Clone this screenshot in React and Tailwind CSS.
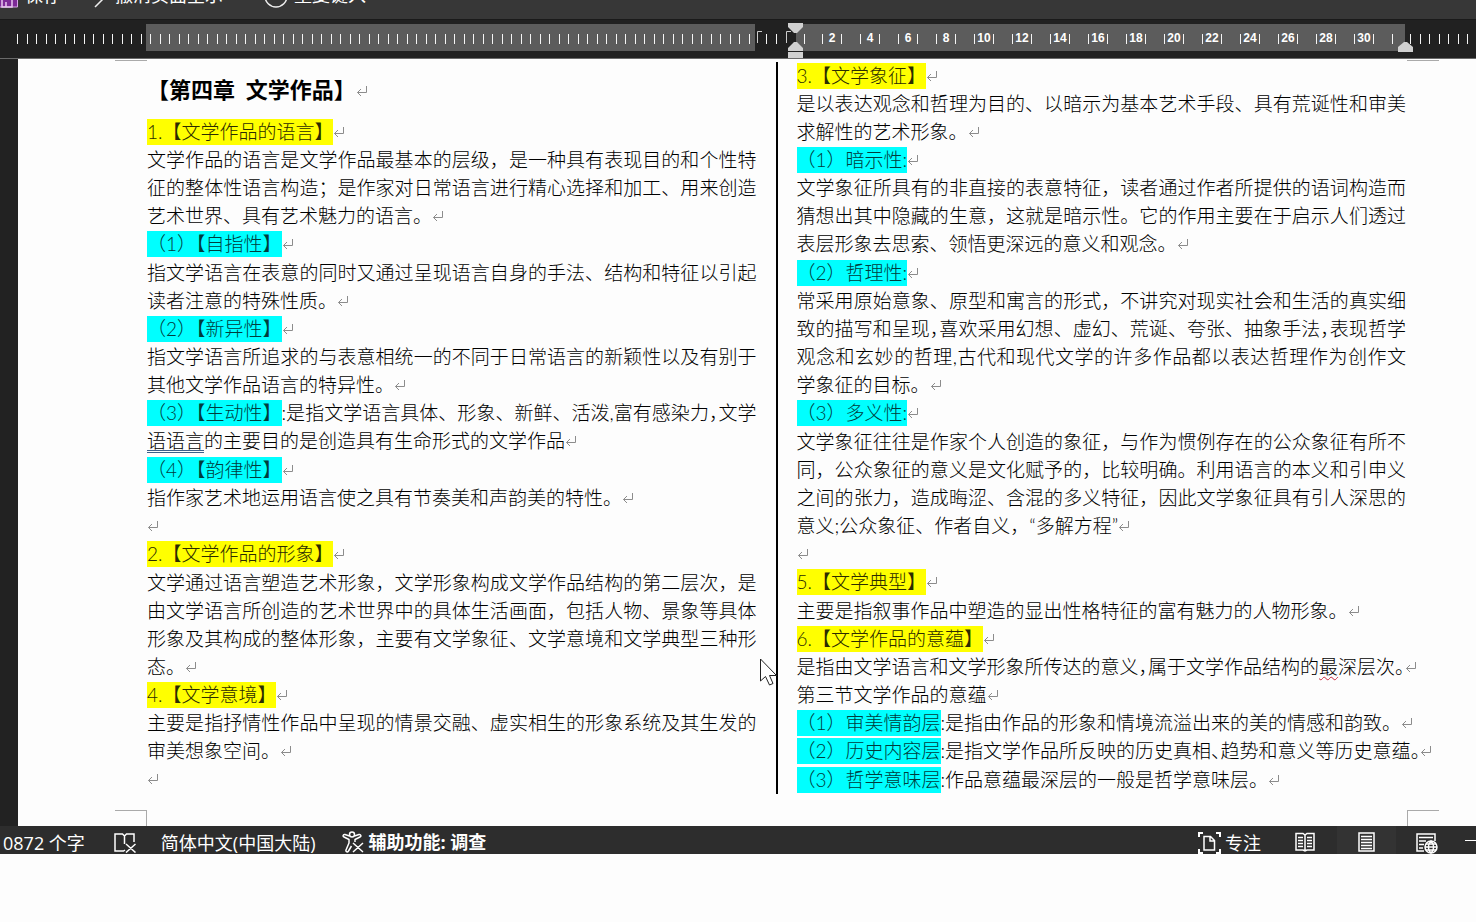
import React from 'react';

const Mark = () => (
    <svg className="inline-block align-baseline mb-0.5 text-[#8c8c8c]" width="12" height="10" viewBox="0 0 12 10" fill="none" stroke="currentColor" aria-hidden="true">
        <path d="M10.5 0V6.5H1.5M5 3L1.5 6.5L5 10" />
    </svg>
);

// Half-width fullwidth punctuation
const Half = ({ children }) => <span className="[font-feature-settings:'halt']">{children}</span>;

const Yellow = ({ children }) => <mark className="inline-block leading-[26px] bg-[#ffff00] text-[#2c2c00]">{children}</mark>;

const Cyan = ({ children }) => <mark className="inline-block leading-[26px] bg-[#00ffff] text-[#003c3c]">{children}</mark>;

// A line that fills the column
const Full = ({ children }) => <span className="block [text-align-last:justify]">{children}</span>;

// The last line of a paragraph
const Last = ({ children }) => <span className="block">{children}<Mark /></span>;

const tickPath = (count, start) =>
    Array.from({ length: count }, (_, i) => `M${Math.round(start + i * 9.5) + 0.5} 0V10`).join('');

const Ticks = ({ count, start }) => (
    <svg className="block w-full h-2.5" stroke="#f5f5f5" fill="none" aria-hidden="true">
        <path d={tickPath(count, start)} />
    </svg>
);

const numbers = [2, 4, 6, 8, 10, 12, 14, 16, 18, 20, 22, 24, 26, 28, 30];

const Toolbar = () => (
    <div className="flex h-5 bg-[#373737] overflow-hidden text-lg leading-6 text-white border-b border-[#1a1a1a]">
        <div className="flex items-end w-full h-2">
            <button type="button" className="flex items-end w-[94px] gap-1.5">
                <svg width="19" height="24" viewBox="0 0 19 24" fill="none" aria-hidden="true">
                    <path d="M0 4H17.5V23H0" fill="#7d2a97" stroke="#d9a5e6" />
                    <path d="M2 14H12V23H2ZM6 18V23" stroke="#e7c6ef" strokeWidth="1.5" />
                </svg>
                <span className="pb-0.5">保存</span>
            </button>
            <button type="button" className="flex items-end w-[168px] gap-2">
                <svg width="13" height="24" viewBox="0 0 13 24" fill="none" stroke="#eee" strokeWidth="1.5" aria-hidden="true">
                    <path d="M1 23L12 12" />
                </svg>
                <span className="pb-0.5">撤消页面呈示</span>
            </button>
            <button type="button" className="flex items-end gap-1.5">
                <svg width="26" height="24" viewBox="0 0 26 24" fill="none" stroke="#eee" strokeWidth="1.5" aria-hidden="true">
                    <circle cx="14" cy="12" r="11" />
                </svg>
                <span className="pb-0.5">重复键入</span>
            </button>
        </div>
    </div>
);

const Ruler = () => (
    <div className="flex pt-1 pb-[7px] bg-[#212121] border-b border-[#6a6a6a]">
        <div className="w-[146px] h-[27px] pt-[10px]">
            <Ticks count={14} start={17} />
        </div>
        <div className="flex-1 min-w-0 h-[27px] pt-[10px] bg-[#5c5c5c]">
            <Ticks count={64} start={4} />
        </div>
        <div className="relative w-[41px] h-[27px] pt-[10px]">
            <Ticks count={2} start={11} />
            <svg className="absolute left-0 -top-px" width="50" height="36" viewBox="0 0 50 36" aria-hidden="true">
                <path d="M2.500 20V8.500H7M31.500 20V8.500H36" fill="none" stroke="#ccc" />
                <path d="M33 0H48V4L42 10H39L33 4Z" fill="#d0d0d0" />
                <path d="M33 28V25L39 19H42L48 25V28ZM33 29H48V35H33Z" fill="#d0d0d0" />
            </svg>
        </div>
        <div className="flex flex-1 min-w-0 h-[27px] pt-[10px] bg-[#5c5c5c] text-xs leading-[9px] font-bold text-white font-['Liberation_Sans',sans-serif]">
            <div className="w-[17px]"><Ticks count={1} start={8} /></div>
            {numbers.map((n) => (
                <div key={n} className="flex flex-1 justify-center">
                    <span className="w-5 h-2.5 border-x border-[#f5f5f5] text-center">{n}</span>
                </div>
            ))}
            <div className="w-[22px]"><Ticks count={1} start={9} /></div>
        </div>
        <div className="relative w-[71px] h-[27px] pt-[10px]">
            <Ticks count={7} start={5} />
            <svg className="absolute -left-[7px] top-[18px]" width="15" height="10" viewBox="0 0 15 10" aria-hidden="true">
                <path d="M0 10V5L6 0H9L15 5V10Z" fill="#d0d0d0" />
            </svg>
        </div>
    </div>
);

const LeftColumn = () => (
    <article className="flex flex-col flex-1 min-w-0 gap-px whitespace-nowrap">
        <h1 className="h-[55px] text-[22px] leading-[55px] font-bold">【第四章&nbsp; 文学作品】<Mark /></h1>
        <section>
            <h2><Yellow>1.【文学作品的语言】</Yellow><Mark /></h2>
            <p>
                <Full>文学作品的语言是文学作品最基本的层级，是一种具有表现目的和个性特</Full>
                <Full>征的整体性语言构造；是作家对日常语言进行精心选择和加工、用来创造</Full>
                <Last>艺术世界、具有艺术魅力的语言。</Last>
            </p>
            <h3><Cyan>（1）【自指性】</Cyan><Mark /></h3>
        </section>
        <section>
            <p>
                <Full>指文学语言在表意的同时又通过呈现语言自身的手法、结构和特征以引起</Full>
                <Last>读者注意的特殊性质。</Last>
            </p>
            <h3><Cyan>（2）【新异性】</Cyan><Mark /></h3>
            <p>
                <Full>指文学语言所追求的与表意相统一的不同于日常语言的新颖性以及有别于</Full>
                <Last>其他文学作品语言的特异性。</Last>
            </p>
            <p>
                <Full><Cyan>（3）【生动性】</Cyan>:是指文学语言具体、形象、新鲜、活泼,富有感染力<Half>，</Half>文学</Full>
                <Last><span className="underline decoration-double decoration-1 decoration-[#3f5f8a] underline-offset-2">语语言</span>的主要目的是创造具有生命形式的文学作品</Last>
            </p>
        </section>
        <section>
            <h3><Cyan>（4）【韵律性】</Cyan><Mark /></h3>
            <p>
                <Last>指作家艺术地运用语言使之具有节奏美和声韵美的特性。</Last>
                <Last />
            </p>
            <h2><Yellow>2.【文学作品的形象】</Yellow><Mark /></h2>
        </section>
        <section>
            <p>
                <Full>文学通过语言塑造艺术形象，文学形象构成文学作品结构的第二层次，是</Full>
                <Full>由文学语言所创造的艺术世界中的具体生活画面，包括人物、景象等具体</Full>
                <Full>形象及其构成的整体形象，主要有文学象征、文学意境和文学典型三种形</Full>
                <Last>态。</Last>
            </p>
            <h2><Yellow>4.【文学意境】</Yellow><Mark /></h2>
            <p>
                <Full>主要是指抒情性作品中呈现的情景交融、虚实相生的形象系统及其生发的</Full>
                <Last>审美想象空间。</Last>
                <Last />
            </p>
        </section>
    </article>
);

const RightColumn = () => (
    <article className="flex flex-col flex-1 min-w-0 gap-px whitespace-nowrap">
        <section>
            <h2><Yellow>3.【文学象征】</Yellow><Mark /></h2>
            <p>
                <Full>是以表达观念和哲理为目的、以暗示为基本艺术手段、具有荒诞性和审美</Full>
                <Last>求解性的艺术形象。</Last>
            </p>
            <h3><Cyan>（1）暗示性:</Cyan><Mark /></h3>
            <p>
                <Full>文学象征所具有的非直接的表意特征，读者通过作者所提供的语词构造而</Full>
                <Full>猜想出其中隐藏的生意，这就是暗示性。它的作用主要在于启示人们透过</Full>
                <Last>表层形象去思索、领悟更深远的意义和观念。</Last>
            </p>
        </section>
        <section>
            <h3><Cyan>（2）哲理性:</Cyan><Mark /></h3>
            <p>
                <Full>常采用原始意象、原型和寓言的形式，不讲究对现实社会和生活的真实细</Full>
                <Full>致的描写和呈现<Half>，</Half>喜欢采用幻想、虚幻、荒诞、夸张、抽象手法<Half>，</Half>表现哲学</Full>
                <Full>观念和玄妙的哲理,古代和现代文学的许多作品都以表达哲理作为创作文</Full>
                <Last>学象征的目标。</Last>
            </p>
            <h3><Cyan>（3）多义性:</Cyan><Mark /></h3>
        </section>
        <section>
            <p>
                <Full>文学象征往往是作家个人创造的象征，与作为惯例存在的公众象征有所不</Full>
                <Full>同，公众象征的意义是文化赋予的，比较明确。利用语言的本义和引申义</Full>
                <Full>之间的张力，造成晦涩、含混的多义特征，因此文学象征具有引人深思的</Full>
                <Last>意义;公众象征、作者自义，“多解方程”</Last>
                <Last />
            </p>
            <h2><Yellow>5.【文学典型】</Yellow><Mark /></h2>
        </section>
        <section>
            <p><Last>主要是指叙事作品中塑造的显出性格特征的富有魅力的人物形象。</Last></p>
            <h2><Yellow>6.【文学作品的意蕴】</Yellow><Mark /></h2>
            <p>
                <Last>是指由文学语言和文学形象所传达的意义<Half>，</Half>属于文学作品结构的<span className="underline decoration-wavy decoration-1 decoration-[#c8283c] underline-offset-2">最</span>深层次<Half>。</Half></Last>
                <Last>第三节文学作品的意蕴</Last>
                <Last><Cyan>（1）审美情韵层</Cyan>:是指由作品的形象和情境流溢出来的美的情感和韵致。</Last>
                <Last><Cyan>（2）历史内容层</Cyan>:是指文学作品所反映的历史真相<Half>、</Half>趋势和意义等历史意蕴<Half>。</Half></Last>
            </p>
        </section>
        <section>
            <p><Last><Cyan>（3）哲学意味层</Cyan>:作品意蕴最深层的一般是哲学意味层。</Last></p>
        </section>
    </article>
);

const StatusBar = () => (
    <footer className="flex items-center h-7 bg-[#2d2d2d] text-lg leading-7 text-white overflow-hidden whitespace-nowrap font-['Open_Sans','Noto_Sans_CJK_SC',sans-serif]">
        <button type="button" className="pl-[3px] pt-1.5">0872 个字</button>
        <button type="button" aria-label="校对" className="ml-[29px] pt-1.5">
            <svg width="22" height="20" viewBox="0 0 22 20" fill="none" stroke="#fff" strokeWidth="1.5">
                <path d="M11 17L9.500 18H1V1H8.500L10.500 3L12.500 1H20V9M10.500 3V11M12 11L21.500 19.500M21.500 11L12 19.500" />
            </svg>
        </button>
        <button type="button" className="ml-[25px] pt-1.5">简体中文(中国大陆)</button>
        <button type="button" className="flex items-center gap-1 ml-[27px] pt-1 font-bold">
            <svg width="22" height="22" viewBox="0 0 22 22" fill="none" stroke="#fff" strokeWidth="1.5" strokeLinejoin="round" aria-hidden="true">
                <circle cx="10" cy="3.500" r="2.500" />
                <path d="M7.500 5L3 3.500C1 3 .500 5.500 2 6L7 8.500V12L4 19C3.500 21 5.500 21.500 6.500 20L9.500 15M12.500 5L17 3.500C19 3 19.500 5.500 18 6L13 8.500V11M11 12L21 21M21 12L11 21" />
            </svg>
            <span>辅助功能: 调查</span>
        </button>
        <div className="flex items-center h-full ml-auto">
            <button type="button" className="flex items-center gap-1 pt-1.5">
                <svg width="23" height="22" viewBox="0 0 23 22" fill="none" stroke="#fff" strokeWidth="2" aria-hidden="true">
                    <path d="M1 5V1H5M18 1H22V5M1 17V21H5M18 21H22V17" />
                    <path d="M6 4.500H12.500L16.500 8.500V18H6ZM12 5V9H16" strokeWidth="1.500" />
                </svg>
                <span>专注</span>
            </button>
            <button type="button" aria-label="阅读视图" className="ml-[34px] pt-1">
                <svg width="20" height="20" viewBox="0 0 20 20" fill="none" stroke="#fff" strokeWidth="1.5">
                    <path d="M1 1.500H8L10 3L12 1.500H19V18H12L10 19L8 18H1ZM10 3V19M3 5.500H8M3 8.500H8M3 11.500H8M3 14.500H8M12 5.500H17M12 8.500H17M12 11.500H17M12 14.500H17" />
                </svg>
            </button>
            <button type="button" aria-label="页面视图" className="flex items-center justify-center w-[59px] h-full ml-[22px] pt-1 bg-[#333333]">
                <svg width="17" height="20" viewBox="0 0 17 20" fill="none" stroke="#fff" strokeWidth="1.5">
                    <path d="M1 1H16V19H1ZM3 4.500H14M3 7.500H14M3 10.500H14M3 13.500H14M3 16.500H14" />
                </svg>
            </button>
            <button type="button" aria-label="Web 版式视图" className="ml-5 pt-1.5">
                <svg width="22" height="21" viewBox="0 0 22 21" fill="none" stroke="#fff" strokeWidth="1.5">
                    <path d="M8 18H1V1H19V8M3 4.500H17M3 8H10M3 11.500H8M3 15H7" />
                    <circle cx="15" cy="14" r="6" />
                    <path d="M9 14H21M10 11H20M10 17H20M15 8C11.500 11 11.500 17 15 20C18.500 17 18.500 11 15 8Z" />
                </svg>
            </button>
            <button type="button" aria-label="缩小" className="w-[11px] h-px ml-[27px] bg-white" />
        </div>
    </footer>
);

export default function App() {
    return (
        <div className="min-h-screen bg-[#fdfdfd] overflow-hidden font-['Noto_Sans_CJK_SC',sans-serif]">
            <Toolbar />
            <Ruler />
            <div className="flex bg-[#222222]">
                <main className="relative flex-1 min-w-0 ml-[18px] bg-[#fdfdfd] text-black text-[19px] leading-7 font-light font-['Lato','Noto_Sans_CJK_SC',sans-serif]">
                    <div className="flex justify-between h-[3px] pl-[97px] pr-[37px]">
                        <div className="w-8 h-0.5 border-b border-[#aaaaaa]" />
                        <div className="w-8 h-0.5 border-b border-[#aaaaaa]" />
                    </div>
                    <div className="flex pl-[129px] pr-[70px]">
                        <LeftColumn />
                        <div className="w-0.5 ml-[19px] mr-[19px] bg-black" />
                        <RightColumn />
                    </div>
                    <div className="flex justify-between pt-4 pl-[97px] pr-[37px]">
                        <div className="w-8 h-4 border-t border-r border-[#aaaaaa]" />
                        <div className="w-8 h-4 border-t border-l border-[#aaaaaa]" />
                    </div>
                    {/* Mouse pointer */}
                    <svg className="absolute left-[742px] top-[599px]" width="18" height="28" viewBox="0 0 18 28" fill="#fff" stroke="#222" aria-hidden="true">
                        <path d="M.500 1V23L5.500 18.500L9.500 27L13 25.500L9.500 17.500H16.500Z" />
                    </svg>
                </main>
            </div>
            <StatusBar />
        </div>
    );
}
